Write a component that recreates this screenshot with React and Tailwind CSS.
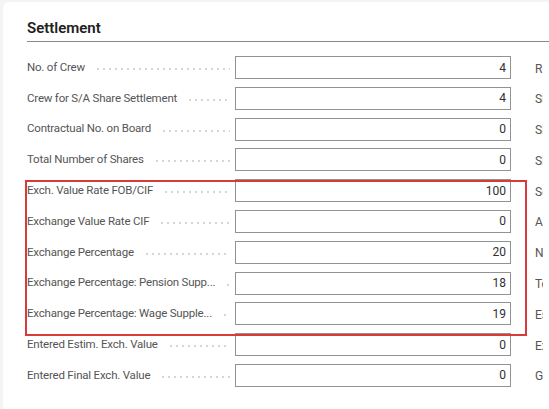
import React from 'react';

const ROWS = [
  { label: 'No. of Crew', value: '4', side: 'Remaining Shares' },
  { label: 'Crew for S/A Share Settlement', value: '4', side: 'Share Value' },
  { label: 'Contractual No. on Board', value: '0', side: 'Shares Total' },
  { label: 'Total Number of Shares', value: '0', side: 'Share Amount' },
  { label: 'Exch. Value Rate FOB/CIF', value: '100', side: 'Settled Amount' },
  { label: 'Exchange Value Rate CIF', value: '0', side: 'Amount' },
  { label: 'Exchange Percentage', value: '20', side: 'Net Amount' },
  { label: 'Exchange Percentage: Pension Supp...', value: '18', side: 'Total Amount' },
  { label: 'Exchange Percentage: Wage Supple...', value: '19', side: 'Estimated Value' },
  { label: 'Entered Estim. Exch. Value', value: '0', side: 'Exch. Value' },
  { label: 'Entered Final Exch. Value', value: '0', side: 'Gross Value' },
];

function FieldRow({ label, value, side }) {
  return (
    <div className="flex items-center h-[23px]">
      <div className="w-[203px] shrink-0 flex items-center h-full">
        <span className="whitespace-nowrap text-[11.5px] tracking-[-0.2px] text-[#555555] pr-3">{label}</span>
        <div className="flex-1 h-[2px] mt-[3px] bg-[linear-gradient(to_right,#d6d6d6_2px,transparent_2px)] bg-[length:6px_2px] bg-repeat-x" />
      </div>
      <div className="ml-[5px] w-[276px] shrink-0 h-full border border-[#929292] bg-white flex items-center justify-end pr-[4px] text-[12px] text-[#303030]">
        {value}
      </div>
      <div className="ml-[24px] w-[8px] overflow-hidden">
        <span className="whitespace-nowrap text-[12px] text-[#555555]">{side}</span>
      </div>
    </div>
  );
}

export default function App() {
  return (
    <div className="relative w-full h-[409px] overflow-hidden bg-[#f4f4f4] font-['Roboto',sans-serif]">
      <div className="absolute left-[3px] top-[2px] right-0 bottom-0 bg-white rounded-tl-md" />
      <div className="relative pl-[27px] pt-[18px]">
        <h2 className="text-[15px] leading-[20px] font-semibold text-[#212121]">Settlement</h2>
        <div className="mt-[3px] h-px bg-[#8a8a8a]" />
        <div className="mt-[14px] flex flex-col gap-[7.8px]">
          {ROWS.map(r => (
            <FieldRow key={r.label} {...r} />
          ))}
        </div>
      </div>
      <div className="absolute left-[25px] top-[180px] w-[502px] h-[156px] border-2 border-[#d93a3a] pointer-events-none" />
    </div>
  );
}
